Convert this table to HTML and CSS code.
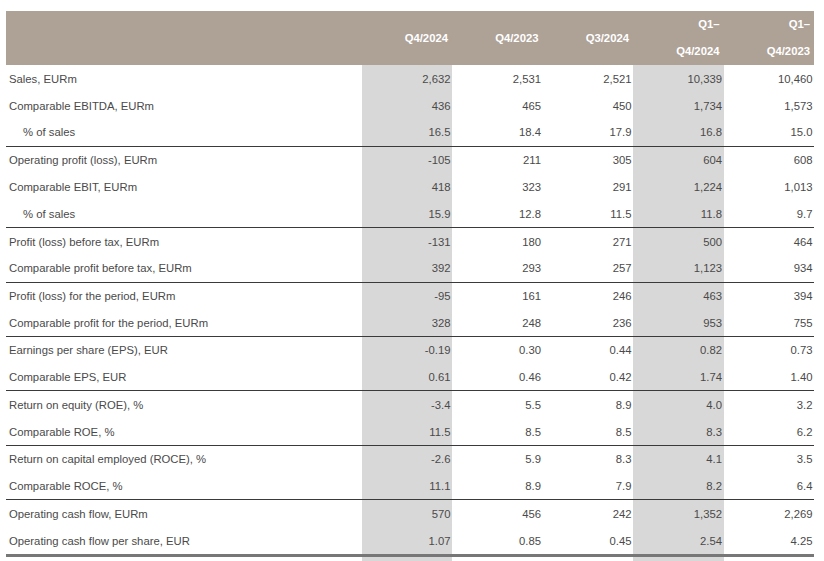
FILE: index.html
```html
<!DOCTYPE html>
<html>
<head>
<meta charset="utf-8">
<link rel="stylesheet" href="styles.css">
</head>
<body>
<div class="wrap">
<table class="kpi">
  <colgroup>
    <col class="c-label"><col class="c-num"><col class="c-num"><col class="c-num"><col class="c-num"><col class="c-num">
  </colgroup>
  <thead>
    <tr>
      <th class="lbl"></th>
      <th>Q4/2024</th>
      <th>Q4/2023</th>
      <th>Q3/2024</th>
      <th>Q1–<br>Q4/2024</th>
      <th>Q1–<br>Q4/2023</th>
    </tr>
  </thead>
  <tbody>
    <tr><td class="lbl">Sales, EURm</td><td class="sh">2,632</td><td>2,531</td><td>2,521</td><td class="sh">10,339</td><td>10,460</td></tr>
    <tr><td class="lbl">Comparable EBITDA, EURm</td><td class="sh">436</td><td>465</td><td>450</td><td class="sh">1,734</td><td>1,573</td></tr>
    <tr class="end"><td class="lbl ind">% of sales</td><td class="sh">16.5</td><td>18.4</td><td>17.9</td><td class="sh">16.8</td><td>15.0</td></tr>
    <tr><td class="lbl">Operating profit (loss), EURm</td><td class="sh">-105</td><td>211</td><td>305</td><td class="sh">604</td><td>608</td></tr>
    <tr><td class="lbl">Comparable EBIT, EURm</td><td class="sh">418</td><td>323</td><td>291</td><td class="sh">1,224</td><td>1,013</td></tr>
    <tr class="end"><td class="lbl ind">% of sales</td><td class="sh">15.9</td><td>12.8</td><td>11.5</td><td class="sh">11.8</td><td>9.7</td></tr>
    <tr><td class="lbl">Profit (loss) before tax, EURm</td><td class="sh">-131</td><td>180</td><td>271</td><td class="sh">500</td><td>464</td></tr>
    <tr class="end"><td class="lbl">Comparable profit before tax, EURm</td><td class="sh">392</td><td>293</td><td>257</td><td class="sh">1,123</td><td>934</td></tr>
    <tr><td class="lbl">Profit (loss) for the period, EURm</td><td class="sh">-95</td><td>161</td><td>246</td><td class="sh">463</td><td>394</td></tr>
    <tr class="end"><td class="lbl">Comparable profit for the period, EURm</td><td class="sh">328</td><td>248</td><td>236</td><td class="sh">953</td><td>755</td></tr>
    <tr><td class="lbl">Earnings per share (EPS), EUR</td><td class="sh">-0.19</td><td>0.30</td><td>0.44</td><td class="sh">0.82</td><td>0.73</td></tr>
    <tr class="end"><td class="lbl">Comparable EPS, EUR</td><td class="sh">0.61</td><td>0.46</td><td>0.42</td><td class="sh">1.74</td><td>1.40</td></tr>
    <tr><td class="lbl">Return on equity (ROE), %</td><td class="sh">-3.4</td><td>5.5</td><td>8.9</td><td class="sh">4.0</td><td>3.2</td></tr>
    <tr class="end"><td class="lbl">Comparable ROE, %</td><td class="sh">11.5</td><td>8.5</td><td>8.5</td><td class="sh">8.3</td><td>6.2</td></tr>
    <tr><td class="lbl">Return on capital employed (ROCE), %</td><td class="sh">-2.6</td><td>5.9</td><td>8.3</td><td class="sh">4.1</td><td>3.5</td></tr>
    <tr class="end"><td class="lbl">Comparable ROCE, %</td><td class="sh">11.1</td><td>8.9</td><td>7.9</td><td class="sh">8.2</td><td>6.4</td></tr>
    <tr><td class="lbl">Operating cash flow, EURm</td><td class="sh">570</td><td>456</td><td>242</td><td class="sh">1,352</td><td>2,269</td></tr>
    <tr class="last"><td class="lbl">Operating cash flow per share, EUR</td><td class="sh">1.07</td><td>0.85</td><td>0.45</td><td class="sh">2.54</td><td>4.25</td></tr>
    <tr class="tail"><td></td><td class="sh"></td><td></td><td></td><td class="sh"></td><td></td></tr>
  </tbody>
</table>
</div>
</body>
</html>
```

FILE: styles.css
```css
html, body {
  margin: 0;
  padding: 0;
  background: #ffffff;
}

.wrap {
  padding: 11px 0 0 6px;
}

.kpi {
  border-collapse: collapse;
  table-layout: fixed;
  width: 808px;
  font-family: "Liberation Sans", Arial, sans-serif;
  font-size: 11.3px;
  color: #4a4a4a;
}

.c-label { width: 355.5px; }
.c-num { width: 90.5px; }

.kpi th {
  background: #aea196;
  color: #ffffff;
  font-weight: bold;
  text-align: right;
  line-height: 27px;
  height: 54px;
  padding: 0 4px 0 0;
  vertical-align: middle;
}

.kpi td {
  height: 27.2px;
  padding: 0 1.5px 0 0;
  text-align: right;
  vertical-align: middle;
  line-height: 14px;
  white-space: nowrap;
}

.kpi tr.end td {
  height: 26.2px;
  border-bottom: 1px solid #3a3a3a;
}

.kpi td.lbl {
  text-align: left;
  padding-left: 3px;
}

.kpi td.ind {
  padding-left: 17px;
}

.kpi td.sh {
  background: #d9d8d8;
}

.kpi tr.last td {
  border-bottom: 3px solid #777777;
}

.kpi tr.tail td {
  height: 6px;
  line-height: 0;
  padding: 0;
}
```
